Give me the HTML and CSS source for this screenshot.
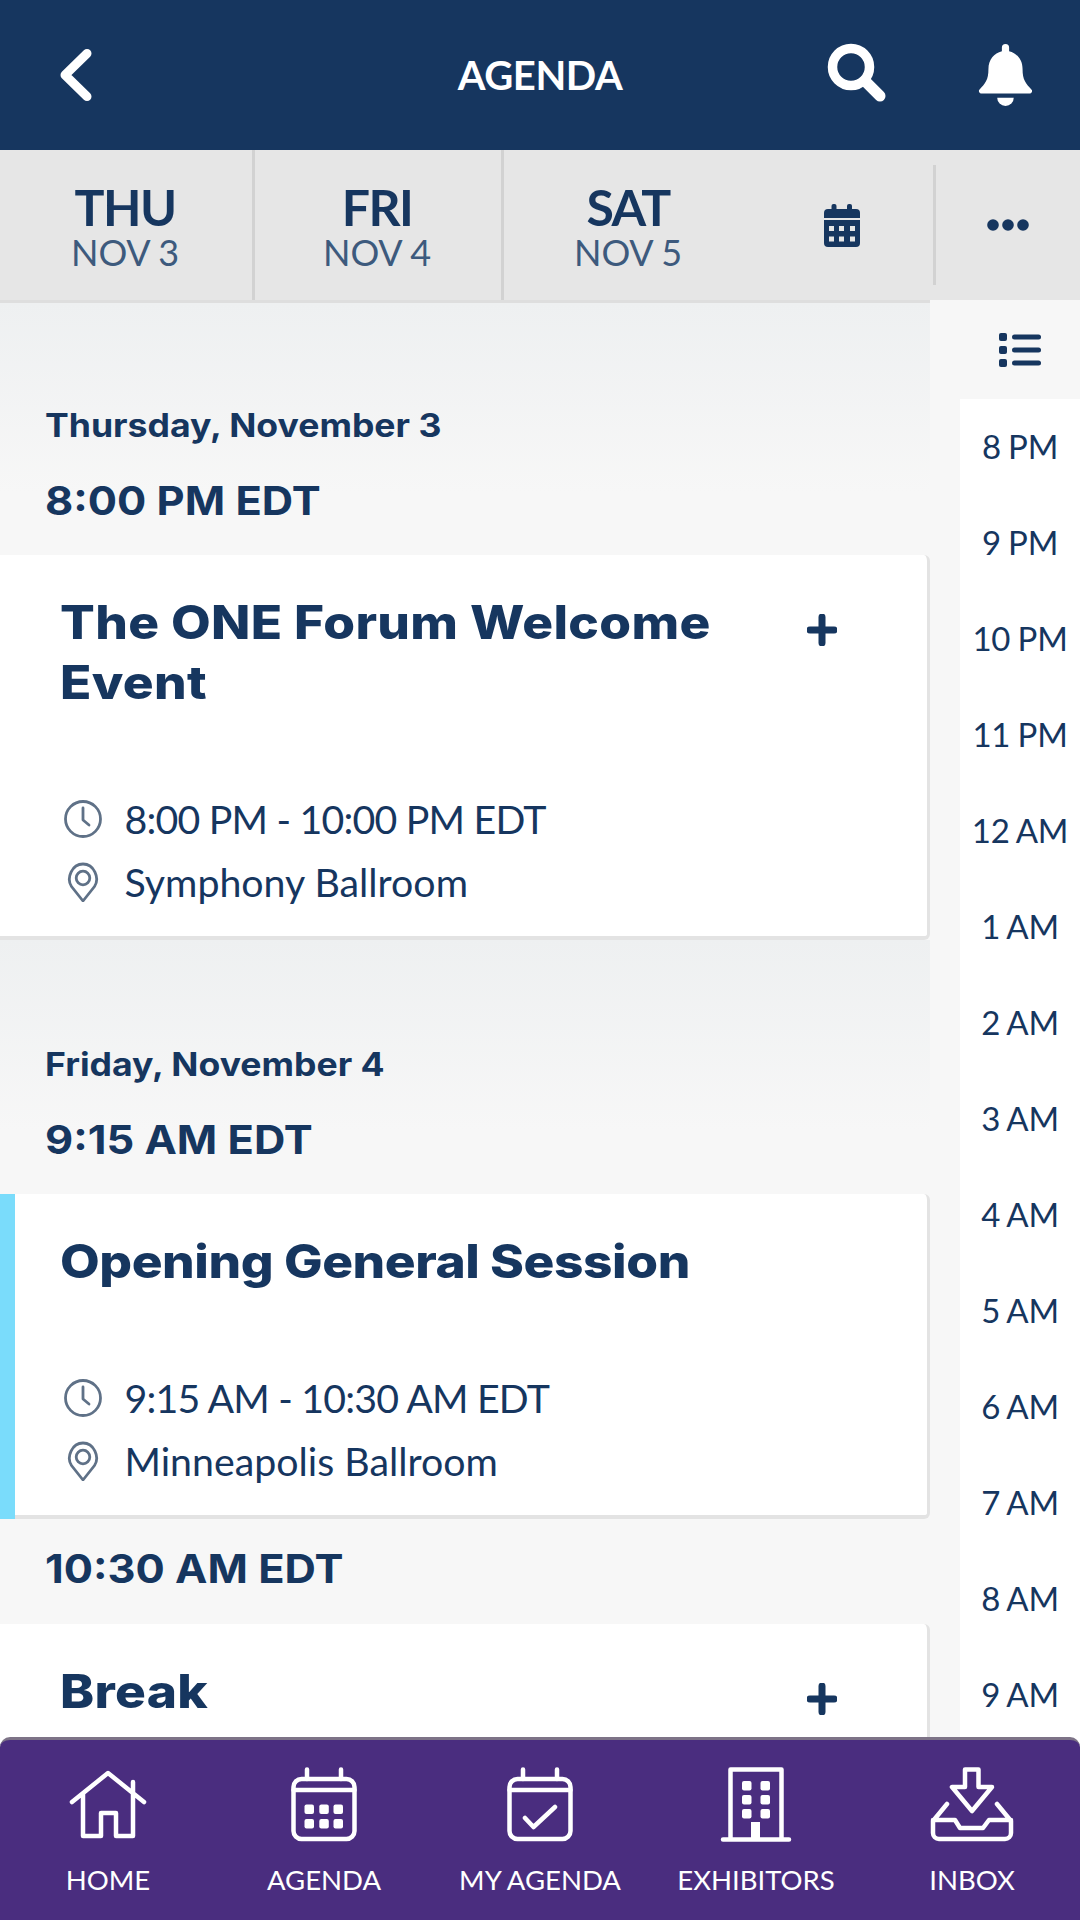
FILE: index.html
```html
<!DOCTYPE html>
<html lang="en">
<head>
<meta charset="utf-8">
<title>Agenda</title>
<link rel="stylesheet" href="styles.css">
</head>
<body>
<div class="app">
  <header class="topbar">
    <svg class="back" viewBox="0 0 40 60"><path d="M33 8.500 11 30l22 21.500"/></svg>
    <h1 class="topbar-title">AGENDA</h1>
    <div class="topbar-actions">
      <svg class="search" viewBox="0 0 60 62"><circle cx="24" cy="24" r="18.500"/><path d="M38 38 53 53"/></svg>
      <svg class="bell" viewBox="0 0 54 60"><path d="M27 0a3.500 3.500 0 0 1 3.500 3.500V7C38 9 43.500 15 43.500 24c0 11 3 14 9 20.500a2.500 2.500 0 0 1-2 3.500H3.500a2.500 2.500 0 0 1-2-3.500C7.500 38 10.500 35 10.500 24 10.500 15 16 9 23.500 7V3.500A3.500 3.500 0 0 1 27 0Z"/><path d="M19 52h16a8 8 0 0 1-16 0Z"/></svg>
    </div>
  </header>

  <nav class="datebar">
    <a class="day-tab day-tab--first"><strong>THU</strong><span>NOV 3</span></a>
    <a class="day-tab day-tab--second"><strong>FRI</strong><span>NOV 4</span></a>
    <a class="day-tab day-tab--last"><strong>SAT</strong><span>NOV 5</span></a>
    <div class="bar-btn bar-btn--cal">
      <svg class="cal-solid" viewBox="0 0 36 43"><rect x="7.500" y="0" width="5" height="9" rx="2"/><rect x="23" y="0" width="5" height="9" rx="2"/><path d="M4 5h28a4 4 0 0 1 4 4v5H0V9a4 4 0 0 1 4-4Z"/><path d="M0 16h36v23a4 4 0 0 1-4 4H4a4 4 0 0 1-4-4Z"/><g class="cal-holes"><rect x="5" y="22" width="5" height="5"/><rect x="15" y="22" width="5" height="5"/><rect x="26" y="22" width="5" height="5"/><rect x="5" y="32.500" width="5" height="5"/><rect x="15" y="32.500" width="5" height="5"/><rect x="26" y="32.500" width="5" height="5"/></g></svg>
    </div>
    <div class="bar-btn bar-btn--more">
      <svg class="dots" viewBox="0 0 42 12"><circle cx="6" cy="6" r="5.800"/><circle cx="21" cy="6" r="5.800"/><circle cx="36" cy="6" r="5.800"/></svg>
    </div>
  </nav>

  <main class="content">
    <section class="schedule">
      <div class="day">
        <h2 class="day-title">Thursday, November 3</h2>
        <h3 class="slot-time">8:00 PM EDT</h3>
        <article class="card">
          <div class="card-head">
            <h4 class="card-title">The ONE Forum Welcome Event</h4>
            <svg class="plus" viewBox="0 0 30 32"><path d="M15 3v26M3 16h24"/></svg>
          </div>
          <div class="card-meta">
            <div class="meta-row meta-row--time"><svg class="meta-icon" viewBox="0 0 40 40"><circle cx="20" cy="20" r="17.500"/><path d="M20 9v12l6 5"/></svg><span>8:00 PM - 10:00 PM EDT</span></div>
            <div class="meta-row"><svg class="meta-icon" viewBox="0 0 40 40"><path d="M20 39 8.500 24.500C3 16 9 2 20 2s17 14 11.500 22.500Z"/><circle cx="20" cy="16" r="6.800"/></svg><span>Symphony Ballroom</span></div>
          </div>
        </article>
      </div>
      <div class="day">
        <h2 class="day-title">Friday, November 4</h2>
        <h3 class="slot-time">9:15 AM EDT</h3>
        <article class="card card--active">
          <div class="card-head">
            <h4 class="card-title">Opening General Session</h4>
          </div>
          <div class="card-meta">
            <div class="meta-row meta-row--time"><svg class="meta-icon" viewBox="0 0 40 40"><circle cx="20" cy="20" r="17.500"/><path d="M20 9v12l6 5"/></svg><span>9:15 AM - 10:30 AM EDT</span></div>
            <div class="meta-row"><svg class="meta-icon" viewBox="0 0 40 40"><path d="M20 39 8.500 24.500C3 16 9 2 20 2s17 14 11.500 22.500Z"/><circle cx="20" cy="16" r="6.800"/></svg><span>Minneapolis Ballroom</span></div>
          </div>
        </article>
        <h3 class="slot-time slot-time--next">10:30 AM EDT</h3>
        <article class="card">
          <div class="card-head">
            <h4 class="card-title">Break</h4>
            <svg class="plus" viewBox="0 0 30 32"><path d="M15 3v26M3 16h24"/></svg>
          </div>
        </article>
      </div>
    </section>

    <aside class="side">
      <div class="side-head">
        <svg class="list-icon" viewBox="0 0 42 34"><rect x="0" y="0" width="8" height="8" rx="2"/><rect x="0" y="13" width="8" height="8" rx="2"/><rect x="0" y="26" width="8" height="8" rx="2"/><rect x="13" y="1.500" width="29" height="5" rx="2.500"/><rect x="13" y="14.500" width="29" height="5" rx="2.500"/><rect x="13" y="27.500" width="29" height="5" rx="2.500"/></svg>
      </div>
      <ul class="hours">
        <li>8 PM</li><li>9 PM</li><li>10 PM</li><li>11 PM</li><li>12 AM</li><li>1 AM</li><li>2 AM</li><li>3 AM</li><li>4 AM</li><li>5 AM</li><li>6 AM</li><li>7 AM</li><li>8 AM</li><li>9 AM</li><li>10 AM</li>
      </ul>
    </aside>
  </main>

  <footer class="tabbar">
    <a class="tab">
      <svg class="tab-icon" viewBox="0 0 90 76"><path d="M9 35 45 6l36 29M20 27v42h18V46h15v23h17V15"/></svg>
      <span>HOME</span>
    </a>
    <a class="tab">
      <svg class="tab-icon" viewBox="0 0 90 76"><rect x="14.500" y="12" width="61" height="60" rx="8"/><path d="M14.500 23h61M28 2.500V12M62 2.500V12"/><g class="tab-fill"><rect x="25.500" y="37.500" width="9.500" height="9.500" rx="2"/><rect x="40.300" y="37.500" width="9.500" height="9.500" rx="2"/><rect x="54.500" y="37.500" width="9.500" height="9.500" rx="2"/><rect x="25.500" y="52" width="9.500" height="9.500" rx="2"/><rect x="40.300" y="52" width="9.500" height="9.500" rx="2"/><rect x="54.500" y="52" width="9.500" height="9.500" rx="2"/></g></svg>
      <span>AGENDA</span>
    </a>
    <a class="tab">
      <svg class="tab-icon" viewBox="0 0 90 76"><rect x="14.500" y="12" width="61" height="60" rx="8"/><path d="M14.500 23h61M28 2.500V12M62 2.500V12M30 51l8.500 9L60 40"/></svg>
      <span>MY AGENDA</span>
    </a>
    <a class="tab">
      <svg class="tab-icon" viewBox="0 0 90 76"><path d="M19.500 71V2.500h51V71M12 72.500h66"/><g class="tab-fill"><rect x="31" y="14" width="9.500" height="9.500" rx="2"/><rect x="49.500" y="14" width="9.500" height="9.500" rx="2"/><rect x="31" y="28" width="9.500" height="9.500" rx="2"/><rect x="49.500" y="28" width="9.500" height="9.500" rx="2"/><rect x="31" y="42" width="9.500" height="9.500" rx="2"/><rect x="49.500" y="42" width="9.500" height="9.500" rx="2"/><rect x="40" y="55" width="9" height="17"/></g></svg>
      <span>EXHIBITORS</span>
    </a>
    <a class="tab">
      <svg class="tab-icon" viewBox="0 0 90 76"><path d="M38 2.500h13.500V20H65L45 44 25 20h13ZM20 37 6 54v12a6 6 0 0 0 6 6h66a6 6 0 0 0 6-6V54L70 37M6 53h22l5 8h23l6-8h22"/></svg>
      <span>INBOX</span>
    </a>
  </footer>
</div>
</body>
</html>
```
FILE: styles.css
```css
* { box-sizing: border-box; }
html, body { margin: 0; padding: 0; }
body { font-family: "Lato", "Liberation Sans", sans-serif; color: #16365f; background: #fff; }
h1, h2, h3, h4, ul { margin: 0; padding: 0; }
svg { display: block; }

.app { position: relative; width: 1080px; height: 1920px; overflow: hidden; display: flex; flex-direction: column; }

.topbar { flex: none; height: 150px; background: #16365f; display: flex; align-items: center; justify-content: space-between; padding: 0 46px 0 54px; position: relative; }
.back { width: 40px; height: 60px; fill: none; stroke: #fff; stroke-width: 9; stroke-linecap: round; stroke-linejoin: round; }
.topbar-title { position: absolute; left: 0; right: 0; text-align: center; font-size: 40px; font-weight: 700; color: #fff; letter-spacing: -0.4px; line-height: 150px; }
.topbar-actions { display: flex; align-items: center; gap: 90px; position: relative; }
.search { width: 60px; height: 62px; margin-top: -2px; fill: none; stroke: #fff; stroke-width: 9.500; stroke-linecap: round; }
.search path { stroke-width: 11; }
.bell { width: 57px; height: 62px; fill: #fff; }

.datebar { flex: none; height: 150px; background: #e6e6e6; display: flex; }
.day-tab { width: 250px; display: flex; flex-direction: column; align-items: center; padding: 32px 2px 0 0; border-right: 3px solid #d2d2d2; }
.day-tab--first { width: 255px; }
.day-tab--second { width: 249px; }
.day-tab--last { border-right: 0; }
.day-tab strong { font-size: 50px; line-height: 50px; font-weight: 700; color: #16365f; letter-spacing: -1.6px; }
.day-tab span { font-size: 36px; line-height: 41px; color: #3d5a7d; letter-spacing: -0.2px; }
.bar-btn { display: flex; align-items: center; justify-content: center; }
.bar-btn--cal { width: 179px; padding: 0 4px 0 0; }
.bar-btn--more { flex: 1; margin: 15px 0; border-left: 3px solid #d2d2d2; }
.cal-solid { width: 36px; height: 43px; fill: #16365f; }
.cal-holes { fill: #e6e6e6; }
.dots { width: 42px; height: 12px; fill: #16365f; }

.content { flex: 1; min-height: 0; display: flex; background: #f7f7f7; }
.schedule { width: 930px; flex: none; border-top: 3px solid #dedede; }
.day { background: linear-gradient(#eef0f1, #f7f7f7 190px); padding-top: 103px; }
.day + .day { padding-top: 105px; }
.day-title { font-family: "Inter", "Liberation Sans", sans-serif; font-size: 32px; line-height: 40px; font-weight: 700; margin-left: 45px; transform: scaleX(1.112); transform-origin: 0 50%; }
.slot-time { font-family: "Inter", "Liberation Sans", sans-serif; font-size: 40px; line-height: 50px; font-weight: 700; margin: 30px 0 29px 45px; transform: scaleX(1.085); transform-origin: 0 50%; }
.slot-time--next { margin: 25px 0 30px 45px; }

.card { position: relative; background: #fff; border-right: 3px solid #e3e3e3; border-bottom: 4px solid #e3e3e3; border-top-right-radius: 6px; border-bottom-right-radius: 6px; padding: 37px 0 23px 60px; }
.card--active::before { content: ""; position: absolute; left: 0; top: 0; bottom: -4px; width: 15px; background: #7adcfb; }
.card-head { display: flex; align-items: flex-start; }
.card-title { font-family: "Inter", "Liberation Sans", sans-serif; width: 640px; margin-right: 50px; font-size: 46px; line-height: 60px; font-weight: 800; letter-spacing: 0.3px; transform: scaleX(1.118); transform-origin: 0 50%; }
.card--active .card-title { letter-spacing: -0.4px; }
.plus { flex: none; width: 30px; height: 32px; margin: 22px 0 0 57px; fill: none; stroke: #16365f; stroke-width: 7; stroke-linecap: round; }
.card-meta { margin-top: 75px; }
.meta-row { height: 63px; display: flex; align-items: center; gap: 22px; font-size: 39.300px; padding-left: 2.500px; }
.meta-row--time { letter-spacing: -0.8px; }
.meta-icon { flex: none; width: 40px; height: 40px; fill: none; stroke: #5f7187; stroke-width: 2.800; stroke-linecap: round; stroke-linejoin: round; }

.side { flex: 1; background: #f7f7f7; }
.side-head { height: 99px; display: flex; align-items: center; justify-content: center; padding-left: 30px; }
.list-icon { width: 42px; height: 34px; fill: #16365f; }
.hours { list-style: none; margin-left: 30px; background: #fff; }
.hours li { height: 96px; padding-bottom: 2px; display: flex; align-items: center; justify-content: center; font-size: 33px; letter-spacing: -0.2px; word-spacing: -1px; white-space: nowrap; }

.tabbar { position: absolute; left: 0; right: 0; bottom: 0; height: 183px; background: #4a2d7f; border-top: 3px solid #7d7387; border-radius: 10px 10px 0 0; display: flex; padding-top: 27px; }
.tab { flex: 1; display: flex; flex-direction: column; align-items: center; color: #fff; font-size: 27.500px; }
.tab span { line-height: 36px; margin-top: 19px; white-space: nowrap; }
.tab-icon { width: 90px; height: 76px; fill: none; stroke: #fff; stroke-width: 4.500; stroke-linecap: round; stroke-linejoin: round; overflow: visible; }
.tab-fill { fill: #fff; stroke: none; }
```
